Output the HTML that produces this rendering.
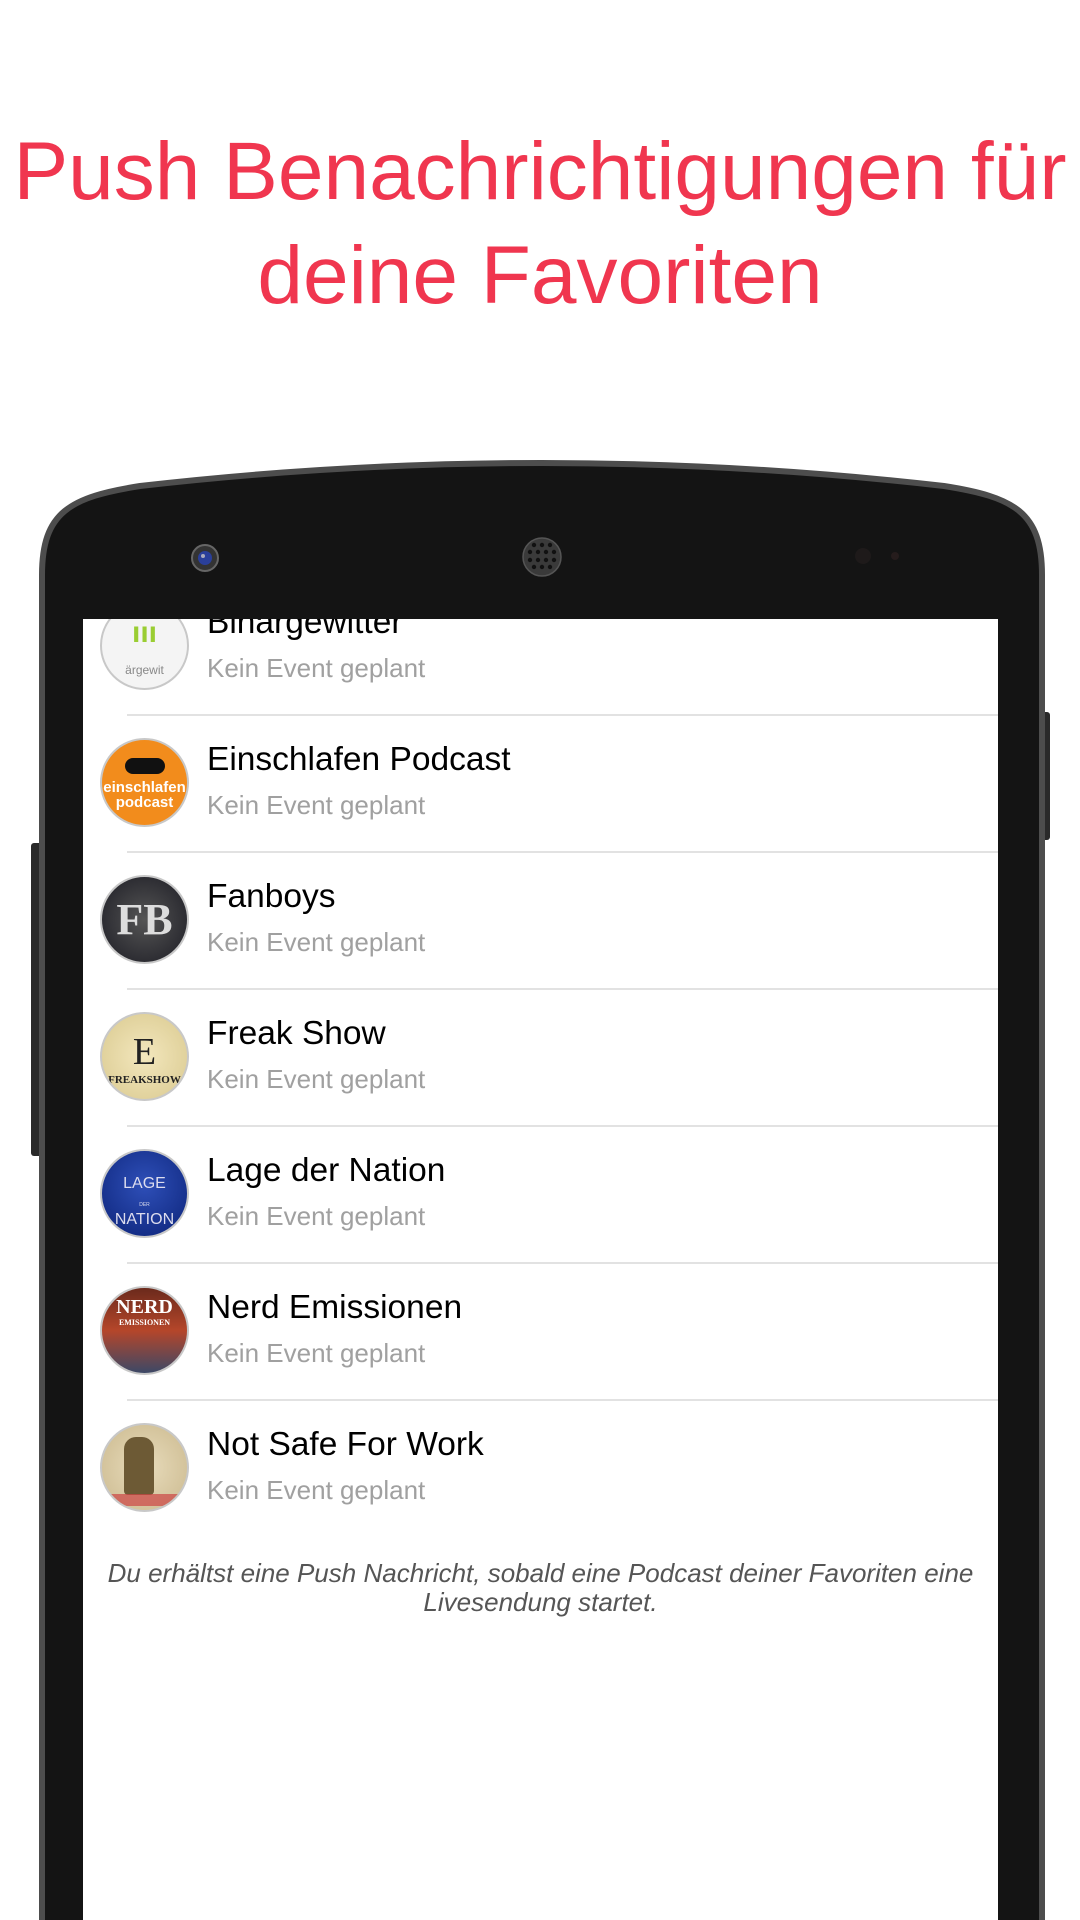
<!DOCTYPE html>
<html><head><meta charset="utf-8">
<style>
*{margin:0;padding:0;box-sizing:border-box}
html,body{width:1080px;height:1920px;overflow:hidden;background:#fff;font-family:"Liberation Sans",Helvetica,Arial,sans-serif}
.h{position:absolute;left:0;width:1080px;text-align:center;color:#f0364f;font-size:82px;line-height:1;white-space:nowrap}
#screen{position:absolute;left:83px;top:619px;width:915px;height:1301px;background:#fff;overflow:hidden}
.t{position:absolute;left:124px;font-size:33.5px;line-height:1;color:#000;white-space:nowrap}
.s{position:absolute;left:124px;font-size:26px;line-height:1;color:#a0a0a0;white-space:nowrap}
.sep{position:absolute;left:44px;right:0;height:2px;background:#e2e2e2}
.av{position:absolute;left:17px;width:89px;height:89px;border-radius:50%;border:2px solid #c8c8c8;overflow:hidden;text-align:center;font-weight:bold}
.f{position:absolute;left:0;width:915px;text-align:center;font-style:italic;font-size:26px;line-height:1;color:#555;white-space:nowrap}
</style></head><body>
<div class="h" style="top:131px">Push Benachrichtigungen für</div>
<div class="h" style="top:235px">deine Favoriten</div>

<svg width="1080" height="1920" style="position:absolute;left:0;top:0">
<rect x="1038" y="712" width="12" height="128" rx="3" fill="#2a2a2a"/>
<rect x="31" y="843" width="12" height="313" rx="3" fill="#2a2a2a"/>
<path d="M42,1930 V575 C42,512 70,497 140,486 Q542,440 944,486 C1014,497 1042,512 1042,575 V1930 Z" fill="#141414" stroke="#4d4d4d" stroke-width="6"/>
<circle cx="205" cy="558" r="13" fill="#333" stroke="#666" stroke-width="2"/>
<circle cx="205" cy="558" r="7" fill="#2a3f9a"/>
<circle cx="203" cy="556" r="2" fill="#aab"/>
<circle cx="542" cy="557" r="19" fill="#3a3a3a" stroke="#555" stroke-width="1.5"/>
<g fill="#111">
<circle cx="534" cy="545" r="2.2"/><circle cx="542" cy="545" r="2.2"/><circle cx="550" cy="545" r="2.2"/>
<circle cx="530" cy="552" r="2.2"/><circle cx="538" cy="552" r="2.2"/><circle cx="546" cy="552" r="2.2"/><circle cx="554" cy="552" r="2.2"/>
<circle cx="530" cy="560" r="2.2"/><circle cx="538" cy="560" r="2.2"/><circle cx="546" cy="560" r="2.2"/><circle cx="554" cy="560" r="2.2"/>
<circle cx="534" cy="567" r="2.2"/><circle cx="542" cy="567" r="2.2"/><circle cx="550" cy="567" r="2.2"/>
</g>
<circle cx="863" cy="556" r="8" fill="#1e1a1a"/>
<circle cx="895" cy="556" r="4" fill="#251c1c"/>
</svg>

<div id="screen">
<div class="av" style="top:-18px;background:#f4f4f4;color:#9acd32;font-size:30px;line-height:60px">ııı<div style="font-size:12px;color:#888;line-height:14px;font-weight:normal">ärgewit</div></div>
<div class="t" style="top:-13px">Binargewitter</div>
<div class="s" style="top:36px">Kein Event geplant</div>
<div class="sep" style="top:95px"></div>

<div class="av" style="top:119px;background:#f28c1c;color:#fff;font-size:15px;line-height:15px;padding-top:30px"><div style="width:40px;height:16px;background:#111;border-radius:8px;margin:-12px auto 6px"></div>einschlafen<br>podcast</div>
<div class="t" style="top:124px">Einschlafen Podcast</div>
<div class="s" style="top:173px">Kein Event geplant</div>
<div class="sep" style="top:232px"></div>

<div class="av" style="top:256px;background:radial-gradient(circle,#555,#1c1c24);color:#ddd;font-size:44px;line-height:85px;font-family:'Liberation Serif',serif">FB</div>
<div class="t" style="top:261px">Fanboys</div>
<div class="s" style="top:310px">Kein Event geplant</div>
<div class="sep" style="top:369px"></div>

<div class="av" style="top:393px;background:radial-gradient(circle,#f3e7bd,#d9c98f);color:#222;font-size:11px;line-height:12px;padding-top:16px;font-family:'Liberation Serif',serif"><div style="font-size:38px;line-height:44px;font-weight:normal">E</div>FREAKSHOW</div>
<div class="t" style="top:398px">Freak Show</div>
<div class="s" style="top:447px">Kein Event geplant</div>
<div class="sep" style="top:506px"></div>

<div class="av" style="top:530px;background:radial-gradient(circle at 50% 40%,#2e4fb8,#0c2378);color:#dde;font-size:16px;line-height:18px;padding-top:24px;font-weight:normal">LAGE<br><span style="font-size:5px;line-height:5px">DER</span><br>NATION</div>
<div class="t" style="top:535px">Lage der Nation</div>
<div class="s" style="top:584px">Kein Event geplant</div>
<div class="sep" style="top:643px"></div>

<div class="av" style="top:667px;background:linear-gradient(#6b2a1c,#b5462a 50%,#3c4866);color:#fff;font-size:20px;line-height:22px;padding-top:8px;font-family:'Liberation Serif',serif">NERD<div style="font-size:8px;line-height:10px">EMISSIONEN</div></div>
<div class="t" style="top:672px">Nerd Emissionen</div>
<div class="s" style="top:721px">Kein Event geplant</div>
<div class="sep" style="top:780px"></div>

<div class="av" style="top:804px;background:radial-gradient(circle,#e8dcbc,#cbb98e);"><div style="position:absolute;left:22px;top:12px;width:30px;height:58px;background:#6d5a35;border-radius:12px 12px 4px 4px"></div><div style="position:absolute;left:0;right:0;bottom:4px;height:12px;background:#c44;opacity:.7"></div></div>
<div class="t" style="top:809px">Not Safe For Work</div>
<div class="s" style="top:858px">Kein Event geplant</div>

<div class="f" style="top:941px">Du erhältst eine Push Nachricht, sobald eine Podcast deiner Favoriten eine</div>
<div class="f" style="top:970px">Livesendung startet.</div>
</div>
</body></html>
